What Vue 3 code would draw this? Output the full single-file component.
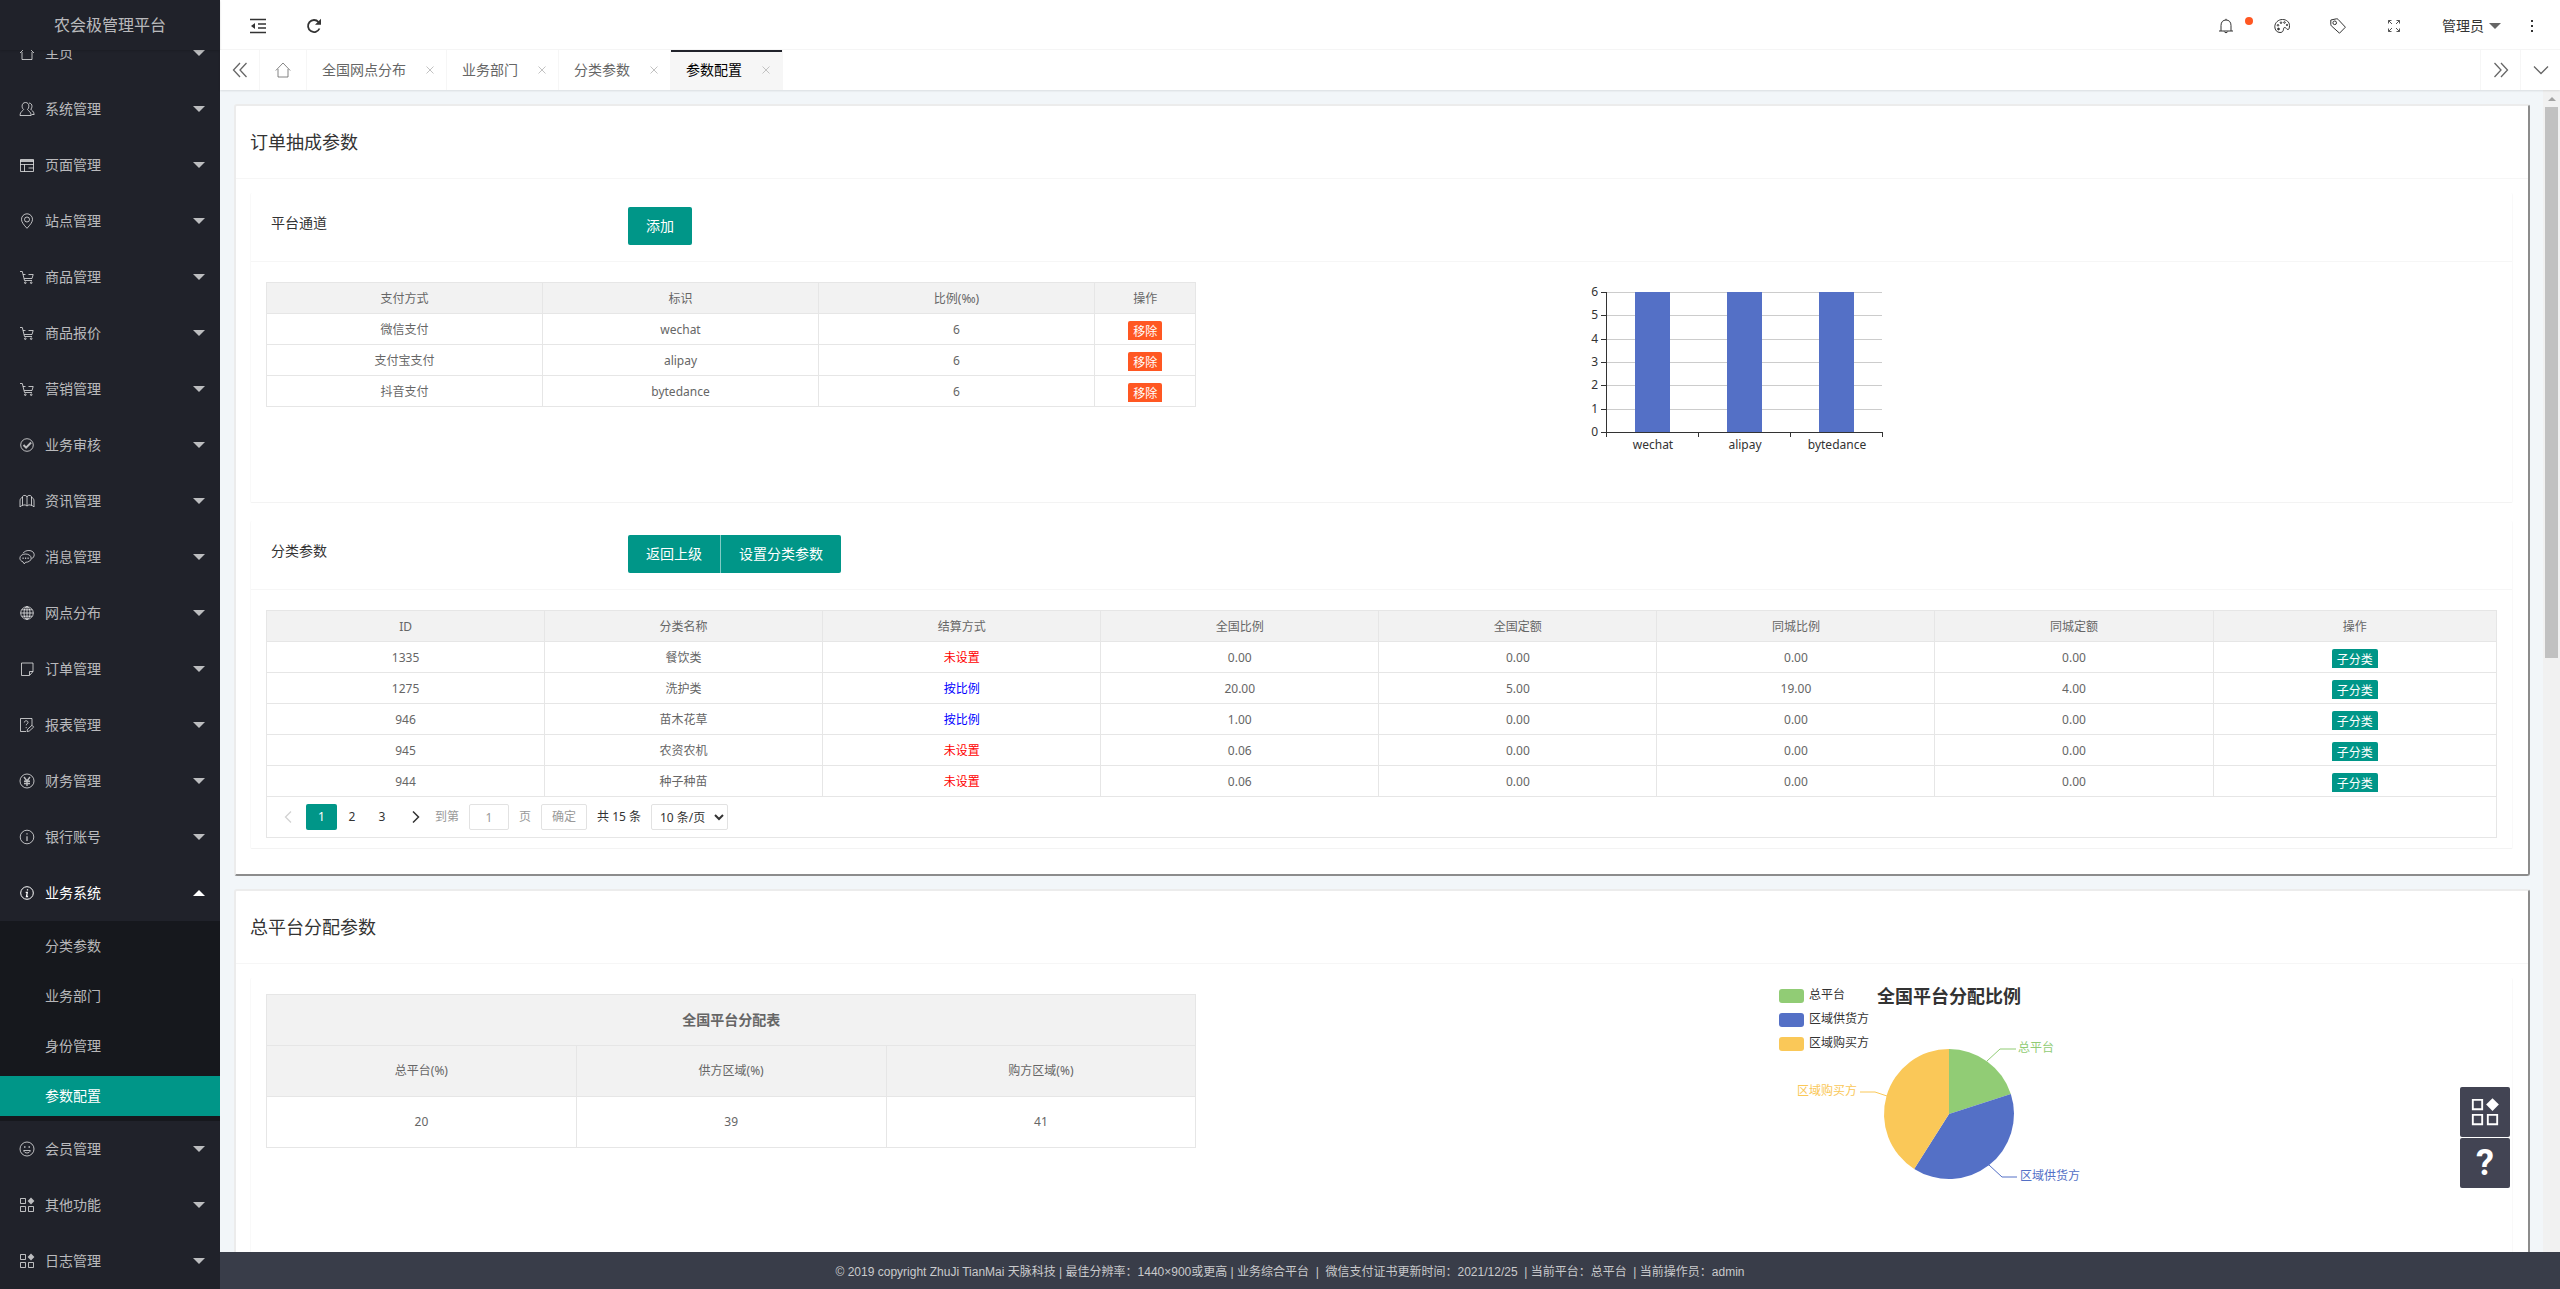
<script setup>
import { ref } from 'vue'

const icons = {
  home: '<path d="M1 8 8 1l7 7M3 7v7.500h10V7"/>',
  user: '<path d="M6.500 1.500c2.200 0 3.400 1.600 3.400 3.600 0 1.500-.6 2.700-1.400 3.400.3 1.300 3.300 1.600 3.700 6H1c.3-4.400 3.300-4.700 3.600-6C3.700 7.800 3.100 6.600 3.100 5.100c0-2 1.200-3.600 3.400-3.600zM10 2c2 .3 3 1.500 3 3.200 0 1.400-.5 2.300-1.200 3 .6 1.200 3 1.700 3.400 5.300h-2.500"/>',
  page: '<path d="M1.500 2.500h13v12h-13zM1.500 7.500h13M5.500 7.500v7M9.500 11h5"/><path d="M1.500 4h13" stroke-width="2"/>',
  pin: '<path d="M8 15.300C4.500 11.500 2.500 9 2.500 6.300a5.500 5.500 0 0 1 11 0C13.500 9 11.500 11.500 8 15.300z"/><circle cx="8" cy="6.500" r="2.500"/>',
  cart: '<path d="M1 2.500h2.300L5.500 11.500h7.500M4 5.500h2.500M9.500 5.500h4.700L13 9.500H5.200"/><circle cx="6.300" cy="13.700" r=".8"/><circle cx="12.200" cy="13.700" r=".8"/>',
  check: '<circle cx="8" cy="8" r="6.300"/><path d="m4.500 8 2.600 2.600 5-5.100" stroke-width="2"/>',
  book: '<path d="M3.500 12.500V3.800C3.500 2 7.500 1.800 8 4c.5-2.200 4.500-2 4.500-.2v8.700c-1.600-1-3.800-.8-4.500.7-.7-1.500-2.900-1.700-4.500-.7zM8 4v9M3.500 4.500C1.800 4.800 1 6 1 8v6c.7-1 1.500-1.300 2.500-1.500M12.500 4.500c1.700.3 2.500 1.500 2.500 3.500v6c-.7-1-1.500-1.300-2.500-1.500"/>',
  chat: '<path d="M6.500 5c3.200 0 5.700 1.800 5.700 4.200 0 2.300-2.400 4.100-5.700 4.100l-1.200 1.600-1.300-2C2.100 12.200.9 10.800.9 9.200.9 6.800 3.300 5 6.500 5zM4 4.200C5.300 2.400 7.500 1.500 9.900 1.500c3 0 5.300 1.800 5.300 4.200 0 1.800-1 3.300-2.600 4"/><path d="M3.500 9.300h1.200M6 9.300h1.200M8.500 9.300h1.200" stroke-width="1.600"/>',
  globe: '<circle cx="8" cy="8" r="6.300"/><ellipse cx="8" cy="8" rx="3" ry="6.300"/><path d="M8 1.700v12.600M1.700 8h12.600M2.700 4.800h10.600M2.700 11.200h10.600"/>',
  note: '<path d="M2.500 2h11.500v8.500L10.500 14.500h-8z"/><path d="M10.500 14v-3.500H14"/>',
  report: '<path d="M7 14.500H1.500v-13h11.500v7"/><path d="M5.300 5.500c0-2.300 3.700-2.300 3.700 0 0 1.300-1.800 1.400-1.800 2.800M7.200 10v1.200M8 14.500l.5-2.200 4.500-4 1.700 1.800-4.500 4z"/>',
  yen: '<circle cx="8" cy="8" r="7"/><path d="m5 4 3 4 3-4M8 8v5M5 8.300h6M5 10.500h6" stroke-width="1.400"/>',
  info: '<circle cx="8" cy="8" r="6.800"/><path d="M8 7.200V12M8 4.300v1.300" stroke-width="1.300"/>',
  infoItalic: '<circle cx="8" cy="8" r="6.300"/><path d="M6.700 7.300h1.600L7.500 11.500h1.600M8.500 4.300v1.300" stroke-width="1.300"/>',
  smile: '<circle cx="8" cy="8" r="7"/><path d="M4.700 9.500c.6 3.300 6 3.300 6.600 0z"/><path d="M5 6h1.500M9.500 6H11" stroke-width="1.600"/>',
  apps: '<path d="M1.500 1.500h5v5h-5zM1.500 9.500h5v5h-5zM9.500 9.500h5v5h-5z"/><path d="m12 .6 3.400 3.400L12 7.400 8.600 4z" fill="currentColor" stroke="none"/>'
}

const menu = ref([
  { name: '主页', icon: 'home' },
  { name: '系统管理', icon: 'user' },
  { name: '页面管理', icon: 'page' },
  { name: '站点管理', icon: 'pin' },
  { name: '商品管理', icon: 'cart' },
  { name: '商品报价', icon: 'cart' },
  { name: '营销管理', icon: 'cart' },
  { name: '业务审核', icon: 'check' },
  { name: '资讯管理', icon: 'book' },
  { name: '消息管理', icon: 'chat' },
  { name: '网点分布', icon: 'globe' },
  { name: '订单管理', icon: 'note' },
  { name: '报表管理', icon: 'report' },
  { name: '财务管理', icon: 'yen' },
  { name: '银行账号', icon: 'info' },
  { name: '业务系统', icon: 'infoItalic', open: true, children: ['分类参数', '业务部门', '身份管理', '参数配置'] },
  { name: '会员管理', icon: 'smile' },
  { name: '其他功能', icon: 'apps' },
  { name: '日志管理', icon: 'apps' }
])

const tabs = ['全国网点分布', '业务部门', '分类参数', '参数配置']
const activeTab = ref('参数配置')

const channels = ref([
  { name: '微信支付', key: 'wechat', rate: 6 },
  { name: '支付宝支付', key: 'alipay', rate: 6 },
  { name: '抖音支付', key: 'bytedance', rate: 6 }
])

const categoryHeads = ['ID', '分类名称', '结算方式', '全国比例', '全国定额', '同城比例', '同城定额', '操作']
const categories = ref([
  { id: 1335, name: '餐饮类', mode: '未设置', nums: ['0.00', '0.00', '0.00', '0.00'] },
  { id: 1275, name: '洗护类', mode: '按比例', nums: ['20.00', '5.00', '19.00', '4.00'] },
  { id: 946, name: '苗木花草', mode: '按比例', nums: ['1.00', '0.00', '0.00', '0.00'] },
  { id: 945, name: '农资农机', mode: '未设置', nums: ['0.06', '0.00', '0.00', '0.00'] },
  { id: 944, name: '种子种苗', mode: '未设置', nums: ['0.06', '0.00', '0.00', '0.00'] }
])

const pageNo = ref('1')
const pageSize = ref('10')

/* bar chart geometry */
const ticks = [0, 1, 2, 3, 4, 5, 6].map(v => ({ v, y: Math.round(150 - (v * 140) / 6) + 0.5 }))
const bars = channels.value.map((c, i) => ({ key: c.key, x: 63 + i * 92, h: (c.rate * 140) / 6 }))

/* pie chart geometry */
const cx = 175
const cy = 131
const r = 65
const shares = [
  { name: '总平台', value: 20, color: '#91cc75' },
  { name: '区域供货方', value: 39, color: '#5470c6' },
  { name: '区域购买方', value: 41, color: '#fac858' }
]
let start = 0
const slices = shares.map(s => {
  const a = (start / 100) * Math.PI * 2
  start += s.value
  const b = (start / 100) * Math.PI * 2
  const p = t => `${cx + r * Math.sin(t)} ${cy - r * Math.cos(t)}`
  return { ...s, d: `M${cx} ${cy}L${p(a)}A${r} ${r} 0 ${b - a > Math.PI ? 1 : 0} 1 ${p(b)}Z` }
})
</script>

<template>
  <div class="layout">
    <aside class="side">
      <div class="logo">农会极管理平台</div>
      <nav class="nav">
        <template v-for="m in menu" :key="m.name">
          <a href="#" class="nav-item" :class="{ open: m.open }">
            <svg class="ico" viewBox="0 0 16 16" v-html="icons[m.icon]"></svg>
            <span>{{ m.name }}</span>
            <i class="caret" :class="{ up: m.open }"></i>
          </a>
          <div v-if="m.children" class="sub-nav">
            <a v-for="c in m.children" :key="c" href="#" :class="{ current: c === activeTab }">{{ c }}</a>
          </div>
        </template>
      </nav>
    </aside>

    <div class="main">
      <header class="top">
        <div class="top-left">
          <button class="top-btn" aria-label="收起菜单">
            <svg class="ico" viewBox="0 0 16 16"><path d="M0 1.500h16M8 6h8M8 10h8M0 14.500h16" stroke-width="1.600" /><path d="M1 8l4-3v6z" fill="currentColor" stroke="none" /></svg>
          </button>
          <button class="top-btn" aria-label="刷新">
            <svg class="ico" viewBox="0 0 16 16"><path d="M13.500 10.500A6 6 0 1 1 12.500 4" stroke-width="1.800" /><path d="M15 .8v6H9z" fill="currentColor" stroke="none" /></svg>
          </button>
        </div>
        <div class="top-right">
          <button class="top-btn bell" aria-label="消息">
            <svg class="ico" viewBox="0 0 16 16"><path d="M1 13h14M3 13V7.500C3 4 5 2 8 2s5 2 5 5.500V13M8 .8V2M6.300 13.500c.3 1.600 3.100 1.600 3.400 0" /></svg>
            <i class="dot"></i>
          </button>
          <button class="top-btn" aria-label="主题">
            <svg class="ico" viewBox="0 0 16 16"><path d="M8.500 1.500c4 0 7 2.600 7 6 0 2.300-.4 4-1.500 4-1.500 0-1.700-2-3.300-2-1.500 0-1 2-1.600 3.300-.5 1.100-1.400 1.700-3.100 1.700C3 14.500.8 12 .8 8.800c0-4.200 3.500-7.300 7.700-7.300z" /><circle cx="7" cy="4.700" r=".8" /><circle cx="10.500" cy="4.500" r=".8" /><circle cx="13" cy="7" r=".7" /><circle cx="4" cy="7.300" r=".8" /><circle cx="4.500" cy="11" r=".9" fill="currentColor" /></svg>
          </button>
          <button class="top-btn" aria-label="便签">
            <svg class="ico" viewBox="0 0 16 16"><path d="M.8 2 6.500.8c.6-.1 1 0 1.500.5l7.400 7.900-5.900 6L1.300 7.800C.9 7.300.7 7 .8 6.500z" /><circle cx="4.700" cy="4.800" r="1.800" /></svg>
          </button>
          <button class="top-btn" aria-label="全屏">
            <svg class="ico thin" viewBox="0 0 16 16"><path d="M2.500 5.500v-3h3M2.500 2.500 6 6M10.500 2.500h3v3M13.500 2.500 10 6M2.500 10.500v3h3M2.500 13.500 6 10M13.500 10.500v3h-3M13.500 13.500 10 10" /></svg>
          </button>
          <button class="admin">管理员<i class="caret"></i></button>
          <button class="more" aria-label="更多"><i></i><i></i><i></i></button>
        </div>
      </header>

      <div class="tabs">
        <button class="tab-ctl" aria-label="向左"><svg class="ico" viewBox="0 0 16 16"><path d="M8 1 1.500 8 8 15M14.500 1 8 8l6.500 7" stroke-width="1.300" /></svg></button>
        <a href="#" class="tab home" aria-label="主页"><svg class="ico" viewBox="0 0 16 16"><path d="M.8 8.500 8 1l7.200 7.500M3 7v8h10V7" stroke-width=".8" /></svg></a>
        <a v-for="t in tabs" :key="t" href="#" class="tab" :class="{ active: t === activeTab }">
          {{ t }}<svg class="close" viewBox="0 0 8 8"><path d="m.5.5 7 7M7.500.5l-7 7" /></svg>
        </a>
        <span class="spacer"></span>
        <button class="tab-ctl line" aria-label="向右"><svg class="ico" viewBox="0 0 16 16"><path d="m1.500 1 6.500 7-6.500 7M8 1l6.500 7L8 15" stroke-width="1.300" /></svg></button>
        <button class="tab-ctl line" aria-label="标签操作"><svg class="ico" viewBox="0 0 16 16"><path d="m1 4.500 7 7 7-7" stroke-width="1.300" /></svg></button>
      </div>

      <div class="view">
        <div class="content">
          <section class="card">
            <h2>订单抽成参数</h2>
            <div class="card-body">
              <div class="panel first">
                <div class="panel-head">
                  <span class="label">平台通道</span>
                  <button class="btn">添加</button>
                </div>
                <div class="panel-body split">
                  <table class="grid channel">
                    <colgroup><col class="w3" /><col class="w3" /><col class="w3" /><col /></colgroup>
                    <thead>
                      <tr><th>支付方式</th><th>标识</th><th>比例(‰)</th><th>操作</th></tr>
                    </thead>
                    <tbody>
                      <tr v-for="c in channels" :key="c.key">
                        <td>{{ c.name }}</td><td>{{ c.key }}</td><td>{{ c.rate }}</td>
                        <td class="op"><button class="mini danger">移除</button></td>
                      </tr>
                    </tbody>
                  </table>
                  <div class="bar-wrap">
                    <svg width="345" height="190" class="chart">
                      <g v-for="t in ticks" :key="t.v">
                        <path :d="`M35 ${t.y}h275`" stroke="#ccc" />
                        <path :d="`M29 ${t.y}h5`" stroke="#333" />
                        <text x="26" :y="t.y + 3" text-anchor="end">{{ t.v }}</text>
                      </g>
                      <g v-for="b in bars" :key="b.key">
                        <rect :x="b.x" :y="150 - b.h" width="35" :height="b.h" fill="#5470c6" />
                        <text :x="b.x + 18" y="167" text-anchor="middle">{{ b.key }}</text>
                      </g>
                      <path d="M34.500 10v145M34 150.500h276M126.500 150v5M218.500 150v5M310.500 150v5" stroke="#333" />
                    </svg>
                  </div>
                </div>
              </div>

              <div class="panel">
                <div class="panel-head">
                  <span class="label">分类参数</span>
                  <div class="btn-group"><button class="btn">返回上级</button><button class="btn">设置分类参数</button></div>
                </div>
                <div class="panel-body">
                  <table class="grid">
                    <colgroup><col v-for="n in 7" :key="n" class="w8" /><col /></colgroup>
                    <thead>
                      <tr><th v-for="h in categoryHeads" :key="h">{{ h }}</th></tr>
                    </thead>
                    <tbody>
                      <tr v-for="c in categories" :key="c.id">
                        <td>{{ c.id }}</td><td>{{ c.name }}</td>
                        <td :class="c.mode === '未设置' ? 'red' : 'blue'">{{ c.mode }}</td>
                        <td v-for="(n, i) in c.nums" :key="i">{{ n }}</td>
                        <td class="op"><button class="mini">子分类</button></td>
                      </tr>
                    </tbody>
                  </table>
                  <div class="pager">
                    <button class="arrow off" aria-label="上一页"><svg viewBox="0 0 8 12"><path d="M7 .5 1.500 6 7 11.500" stroke-width="1.300" /></svg></button>
                    <button class="num on">1</button>
                    <button class="num">2</button>
                    <button class="num">3</button>
                    <button class="arrow" aria-label="下一页"><svg viewBox="0 0 8 12"><path d="M1 .5 6.500 6 1 11.500" stroke-width="1.500" /></svg></button>
                    <label class="jump">到第<input v-model="pageNo" type="text" />页</label>
                    <button class="ok">确定</button>
                    <span class="total">共 15 条</span>
                    <select v-model="pageSize" aria-label="每页条数">
                      <option value="10">10 条/页</option>
                      <option value="20">20 条/页</option>
                    </select>
                  </div>
                </div>
              </div>
            </div>
          </section>

          <section class="card">
            <h2>总平台分配参数</h2>
            <div class="card-body">
              <div class="panel">
                <div class="panel-body split share">
                  <table class="grid tall">
                    <thead>
                      <tr><th colspan="3" class="cap">全国平台分配表</th></tr>
                      <tr><th>总平台(%)</th><th>供方区域(%)</th><th>购方区域(%)</th></tr>
                    </thead>
                    <tbody>
                      <tr><td v-for="s in shares" :key="s.name">{{ s.value }}</td></tr>
                    </tbody>
                  </table>
                  <div class="pie-wrap">
                    <svg width="350" height="250" class="chart">
                      <g v-for="(s, i) in shares" :key="s.name">
                        <rect x="5" :y="6 + i * 24" width="25" height="14" rx="3" :fill="s.color" />
                        <text x="35" :y="16 + i * 24">{{ s.name }}</text>
                      </g>
                      <text class="pie-title" x="175" y="20" text-anchor="middle">全国平台分配比例</text>
                      <path v-for="s in slices" :key="s.name" :d="s.d" :fill="s.color" />
                      <path d="M213 78 226 66h16" stroke="#91cc75" />
                      <path d="m215 182 13 12h15" stroke="#5470c6" />
                      <path d="m113 113-12-4H86" stroke="#fac858" />
                      <text x="244" y="69" class="t-green">总平台</text>
                      <text x="246" y="197" class="t-blue">区域供货方</text>
                      <text x="83" y="112" text-anchor="end" class="t-yellow">区域购买方</text>
                    </svg>
                  </div>
                </div>
              </div>
            </div>
          </section>
        </div>
        <div class="scrollbar"><i class="sb-up"></i><i class="sb-thumb"></i></div>
      </div>

      <footer class="foot">© 2019 copyright ZhuJi TianMai 天脉科技 | 最佳分辨率：1440×900或更高 | 业务综合平台 &nbsp;|&nbsp; 微信支付证书更新时间：2021/12/25 &nbsp;| 当前平台：总平台 &nbsp;| 当前操作员：admin</footer>
    </div>

    <div class="float">
      <button aria-label="应用"><svg class="ico" viewBox="0 0 16 16" v-html="icons.apps"></svg></button>
      <button aria-label="帮助">?</button>
    </div>
  </div>
</template>

<style>
body {
  margin: 0;
  background: #f2f6f9;
}
</style>

<style scoped>
* {
  box-sizing: border-box;
}
.layout {
  display: flex;
  height: 100vh;
  overflow: hidden;
  font: 14px/24px "Noto Sans", "Noto Sans CJK SC", sans-serif;
  color: #333;
}
a {
  color: inherit;
  text-decoration: none;
}
button,
input,
select {
  font: inherit;
  color: inherit;
  margin: 0;
  padding: 0;
  border: 0;
  background: none;
}
.ico {
  width: 16px;
  height: 16px;
  flex: none;
  fill: none;
  stroke: currentColor;
  stroke-width: 1;
}
.ico.thin {
  color: #555;
}
.caret {
  border: 6px solid transparent;
  border-top-color: currentColor;
  border-bottom-width: 0;
}
.caret.up {
  border-top-width: 0;
  border-bottom: 6px solid currentColor;
}

/* sidebar */
.side {
  display: flex;
  flex-direction: column;
  width: 220px;
  flex: none;
  background: #20222a;
  color: rgba(255, 255, 255, 0.7);
}
.logo {
  flex: none;
  height: 50px;
  line-height: 50px;
  text-align: center;
  font-size: 16px;
  background: #20222a;
  box-shadow: 0 1px 2px rgba(0, 0, 0, 0.15);
  z-index: 1;
}
.nav {
  margin-top: -25px;
}
.nav-item {
  display: flex;
  align-items: center;
  height: 56px;
  padding: 0 15px 0 19px;
}
.nav-item span {
  flex: 1;
  margin-left: 10px;
}
.nav-item.open {
  color: #fff;
}
.sub-nav {
  background: #16181d;
  padding: 5px 0;
}
.sub-nav a {
  display: block;
  height: 40px;
  line-height: 40px;
  padding-left: 45px;
  margin-bottom: 10px;
}
.sub-nav a:last-child {
  margin-bottom: 0;
}
.sub-nav .current {
  background: #009688;
  color: #fff;
}

/* header */
.main {
  flex: 1;
  min-width: 0;
  display: flex;
  flex-direction: column;
}
.top {
  flex: none;
  display: flex;
  justify-content: space-between;
  height: 50px;
  background: #fff;
  border-bottom: 1px solid #f6f6f6;
}
.top-left,
.top-right {
  display: flex;
  align-items: center;
  padding-top: 2px;
}
.top-left {
  padding-left: 10px;
}
.top-btn {
  width: 56px;
  height: 48px;
  display: flex;
  align-items: center;
  justify-content: center;
}
.bell {
  position: relative;
}
.dot {
  position: absolute;
  right: 1px;
  top: 15px;
  width: 8px;
  height: 8px;
  border-radius: 50%;
  background: #ff5722;
}
.admin {
  display: flex;
  align-items: center;
  gap: 5px;
  margin-left: 20px;
}
.admin .caret {
  color: #666;
}
.more {
  display: flex;
  flex-direction: column;
  align-items: center;
  gap: 3px;
  width: 18px;
  margin: 0 19px 0 22px;
}
.more i {
  width: 2px;
  height: 2px;
  background: #333;
}

/* tabs */
.tabs {
  flex: none;
  display: flex;
  height: 40px;
  background: #fff;
  color: #666;
  box-shadow: 0 1px 2px rgba(0, 0, 0, 0.1);
  z-index: 1;
}
.tab-ctl {
  width: 40px;
  display: flex;
  align-items: center;
  justify-content: center;
  border-right: 1px solid #f6f6f6;
}
.tab-ctl.line {
  border-right: 0;
  border-left: 1px solid #f6f6f6;
}
.tab {
  display: flex;
  align-items: center;
  gap: 20px;
  padding: 0 12px 0 15px;
  border-right: 1px solid #f6f6f6;
}
.tab.home {
  padding: 0 15px;
}
.tab.active {
  background: #f6f6f6;
  color: #000;
  box-shadow: inset 0 2px #20222a;
}
.close {
  width: 8px;
  height: 8px;
  fill: none;
  stroke: #c2c2c2;
}
.spacer {
  flex: 1;
}

/* content */
.view {
  flex: 1;
  min-height: 0;
  display: flex;
  overflow: hidden;
}
.content {
  flex: 1;
  min-width: 0;
  padding: 14px 13px 0 14px;
  background: #f2f6f9;
}
.scrollbar {
  width: 17px;
  flex: none;
  display: flex;
  flex-direction: column;
  align-items: center;
  background: #f1f1f1;
}
.sb-up {
  margin: 7px 0 6px;
  border: 4px solid transparent;
  border-top-width: 0;
  border-bottom-color: #a3a3a3;
}
.sb-thumb {
  width: 13px;
  height: 47.4%;
  background: #c1c1c1;
}
.card {
  background: #fff;
  border: 2px solid #ececec;
  border-right-color: #8c8c8c;
  border-bottom-color: #8c8c8c;
  border-radius: 3px;
  margin-bottom: 13px;
}
.card h2 {
  margin: 0;
  height: 73px;
  padding-left: 14px;
  line-height: 72px;
  font-size: 18px;
  font-weight: 400;
  border-bottom: 1px solid #f6f6f6;
}
.card-body {
  padding: 14px 15px 25px 14px;
}
.panel {
  border: 1px solid #f9f9f9;
  border-top: 0;
  border-bottom-color: #f3f3f3;
  border-radius: 2px;
}
.panel.first {
  margin-bottom: 18px;
}
.panel-head {
  display: flex;
  align-items: flex-start;
  height: 69px;
  padding: 14px 20px 0;
  border-bottom: 1px solid #f6f6f6;
}
.label {
  width: 357px;
  line-height: 32px;
}
.btn {
  height: 38px;
  padding: 0 18px;
  border-radius: 2px;
  background: #009688;
  color: #fff;
}
.btn-group {
  display: flex;
}
.btn-group .btn + .btn {
  border-left: 1px solid rgba(255, 255, 255, 0.5);
}
.btn-group .btn:first-child {
  border-radius: 2px 0 0 2px;
}
.btn-group .btn:last-child {
  border-radius: 0 2px 2px 0;
}
.panel-body {
  padding: 20px 15px 10px;
}
.split {
  display: flex;
  align-items: flex-start;
  min-height: 240px;
}
.grid {
  width: 100%;
  table-layout: fixed;
  border-collapse: collapse;
  font-size: 12px;
  line-height: 20px;
  color: #666;
  text-align: center;
}
.split .grid {
  width: 41.7%;
  flex: none;
}
.grid th,
.grid td {
  height: 31px;
  padding: 2px 0 0;
  border: 1px solid #e6e6e6;
  font-weight: 400;
}
.grid th {
  background: #f2f2f2;
}
.w3 {
  width: 29.7%;
}
.w8 {
  width: 12.47%;
}
.mini {
  display: block;
  height: 19px;
  margin: 0 auto;
  padding: 3px 5px 0;
  line-height: 16px;
  border-radius: 2px 2px 0 0;
  background: #009688;
  color: #fff;
}
.mini.danger {
  background: #ff5722;
}
.red {
  color: #f00;
}
.blue {
  color: #00f;
}
.grid.tall th,
.grid.tall td {
  height: 51px;
  padding: 0;
}
.grid .cap {
  font-size: 14px;
  font-weight: 700;
}
.share {
  padding-top: 16px;
  min-height: 420px;
}
.bar-wrap,
.pie-wrap {
  flex: 1;
  display: flex;
  justify-content: center;
}
.bar-wrap {
  padding-right: 16%;
  padding-left: 7%;
  margin-right: 4px;
}
.pie-wrap {
  padding-left: 9%;
  margin: -11px -4px 0 0;
}
.chart {
  flex: none;
  font-size: 12px;
  fill: none;
}
.chart text {
  fill: #333;
}
.chart .pie-title {
  font-size: 18px;
  font-weight: 700;
}
.chart .t-green {
  fill: #91cc75;
}
.chart .t-blue {
  fill: #5470c6;
}
.chart .t-yellow {
  fill: #fac858;
}

/* pagination */
.pager {
  display: flex;
  align-items: center;
  height: 41px;
  padding-left: 6px;
  border: 1px solid #e6e6e6;
  border-top: 0;
  font-size: 12px;
}
.arrow {
  width: 30px;
  height: 26px;
  display: flex;
  align-items: center;
  justify-content: center;
}
.arrow svg {
  width: 8px;
  height: 12px;
  fill: none;
  stroke: currentColor;
}
.arrow.off {
  color: #d2d2d2;
  margin-right: 3px;
}
.num {
  width: 30px;
  height: 26px;
}
.num.on {
  width: 31px;
  border-radius: 2px;
  background: #009688;
  color: #fff;
}
.num + .arrow {
  margin-left: 4px;
}
.jump {
  display: flex;
  align-items: center;
  gap: 10px;
  margin-left: 4px;
  color: #999;
}
.jump input {
  width: 40px;
  height: 26px;
  text-align: center;
  border: 1px solid #e2e2e2;
  border-radius: 2px;
}
.ok {
  width: 46px;
  height: 26px;
  margin: 0 10px;
  color: #999;
  border: 1px solid #e2e2e2;
  border-radius: 2px;
}
.total {
  margin-right: 10px;
}
select {
  width: 77px;
  height: 26px;
  padding-left: 4px;
  border: 1px solid #e2e2e2;
  border-radius: 2px;
  background: #fff;
}

/* footer */
.foot {
  flex: none;
  height: 37px;
  line-height: 40px;
  padding-right: 200px;
  text-align: center;
  font-family: "Liberation Sans", "Noto Sans CJK SC", sans-serif;
  font-size: 12px;
  background: #393d49;
  color: #c9cacc;
  white-space: nowrap;
}

/* floating tools */
.float {
  position: fixed;
  right: 50px;
  bottom: 101px;
  display: flex;
  flex-direction: column;
  gap: 1px;
}
.float button {
  width: 50px;
  height: 50px;
  display: flex;
  align-items: center;
  justify-content: center;
  border-radius: 2px;
  background: #424453;
  color: #fff;
  font: 700 36px "Roboto", sans-serif;
}
.float .ico {
  width: 30px;
  height: 30px;
}
</style>
